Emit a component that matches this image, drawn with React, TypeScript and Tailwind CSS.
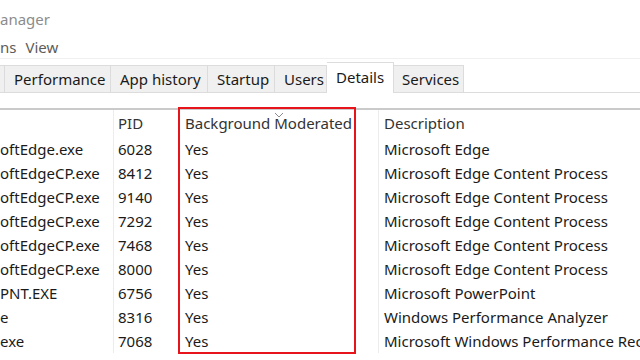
import React from 'react';

const rows = [
    { name: 'oftEdge.exe', pid: '6028', desc: 'Microsoft Edge' },
    { name: 'oftEdgeCP.exe', pid: '8412', desc: 'Microsoft Edge Content Process' },
    { name: 'oftEdgeCP.exe', pid: '9140', desc: 'Microsoft Edge Content Process' },
    { name: 'oftEdgeCP.exe', pid: '7292', desc: 'Microsoft Edge Content Process' },
    { name: 'oftEdgeCP.exe', pid: '7468', desc: 'Microsoft Edge Content Process' },
    { name: 'oftEdgeCP.exe', pid: '8000', desc: 'Microsoft Edge Content Process' },
    { name: 'PNT.EXE', pid: '6756', desc: 'Microsoft PowerPoint' },
    { name: 'e', pid: '8316', desc: 'Windows Performance Analyzer' },
    { name: 'exe', pid: '7068', desc: 'Microsoft Windows Performance Recorder' },
];

const tabs = [
    { label: 'Performance', w: 'w-[106px]' },
    { label: 'App history', w: 'w-[97px]' },
    { label: 'Startup', w: 'w-[67px]' },
    { label: 'Users', w: 'w-[52px]' },
];

export default function App() {
    return (
        <div className="relative h-[360px] w-[640px] overflow-hidden bg-white font-['Noto_Sans',sans-serif] text-[15px] text-[#1a1a1a]">
            {/* title bar */}
            <div className="flex h-[36px] items-center pt-[2px] text-[15px] text-[#8c8c8c]">
                <span>anager</span>
            </div>
            {/* menu */}
            <div className="flex h-[22px] items-center gap-[9px] text-[#5c5c5c]">
                <span>ns</span>
                <span>View</span>
            </div>

            {/* tabs */}
            <div className="border-t border-[#f0f0f0]">
                <div className="flex h-[34px] items-end border-b border-[#dcdcdc]">
                    <div className="h-[27px] w-[5px] border-r border-t border-[#dcdcdc] bg-[#f0f0f0]" />
                    {tabs.map((t) => (
                        <div
                            key={t.label}
                            className={`${t.w} flex h-[27px] items-center border-r border-t border-[#dcdcdc] bg-[#f0f0f0] pl-[9px] pt-[1px]`}
                        >
                            {t.label}
                        </div>
                    ))}
                    <div className="-mb-[1px] flex h-[31px] w-[67px] items-center border-r border-t border-[#dcdcdc] bg-white pb-[2px] pl-[9px]">
                        Details
                    </div>
                    <div className="flex h-[27px] w-[70px] items-center border-r border-t border-[#dcdcdc] bg-[#f0f0f0] pl-[8px] pt-[1px]">
                        Services
                    </div>
                </div>
            </div>

            {/* list */}
            <div className="mt-[15px] border-t-2 border-[#cacaca]">
                <div className="grid h-[27px] grid-cols-[113px_65px_200px_1fr] items-center whitespace-nowrap text-[#333]">
                    <div />
                    <div className="flex h-full items-center border-l border-[#ececec] pl-[4px]">PID</div>
                    <div className="relative flex h-full items-center border-l border-[#ececec] pl-[6px]">
                        Background Moderated
                        <svg className="absolute left-[95px] top-[2px]" width="10" height="6" viewBox="0 0 10 6">
                            <path d="M1 1 L5 5 L9 1" fill="none" stroke="#8a8a8a" strokeWidth="1" />
                        </svg>
                    </div>
                    <div className="flex h-full items-center border-l border-[#ececec] pl-[5px]">Description</div>
                </div>
                {rows.map((r, i) => (
                    <div key={i} className="grid h-[24px] grid-cols-[113px_65px_200px_1fr] items-center whitespace-nowrap">
                        <div className="flex h-full items-center overflow-hidden">{r.name}</div>
                        <div className="flex h-full items-center border-l border-[#ececec] pl-[4px]">{r.pid}</div>
                        <div className="flex h-full items-center border-l border-[#ececec] pl-[6px]">Yes</div>
                        <div className="flex h-full items-center overflow-hidden border-l border-[#ececec] pl-[5px]">{r.desc}</div>
                    </div>
                ))}
            </div>

            {/* highlight annotation */}
            <div className="absolute left-[178px] top-[107px] h-[247px] w-[178px] border-2 border-[#e8141c]" />
        </div>
    );
}
